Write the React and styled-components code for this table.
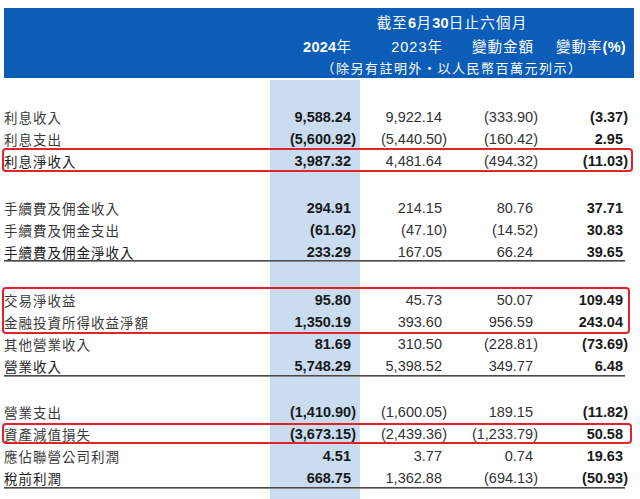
import React from 'react';
import styled, { createGlobalStyle, css } from 'styled-components';

const GlobalStyle = createGlobalStyle`
  html, body { margin: 0; padding: 0; background: #fff; }
  body {
    font-family: "Liberation Sans", "Noto Sans CJK TC", sans-serif;
    overflow: hidden;
  }
`;

const COLS = '270px 90px 91px 91px 90px';

const Page = styled.div`
  width: 640px;
  height: 499px;
  box-sizing: border-box;
  padding-top: 8px;
  display: flex;
  flex-direction: column;
`;

const Header = styled.header`
  margin-left: 4px;
  width: 630px;
  height: 70px;
  box-sizing: border-box;
  padding-top: 1px;
  background: #0b5db8;
  color: #fff;
  display: grid;
  grid-template-columns: 266px 90px 91px 91px 92px;
  grid-template-rows: 24px 24px 20px;
  align-items: center;
  font-size: 14.5px;
`;

const Period = styled.div`
  grid-column: 2 / -1;
  text-align: center;
  letter-spacing: 1.2px;
`;

const HeadCell = styled.div`
  text-align: right;
  padding-right: 8px;
  letter-spacing: 1px;
  white-space: nowrap;
`;

const Strong = styled.b`
  font-weight: 700;
  letter-spacing: 0.3px;
`;

const Note = styled.div`
  grid-column: 2 / -1;
  text-align: center;
  font-size: 13px;
  letter-spacing: 1.5px;
  white-space: nowrap;
`;

const Sheet = styled.main`
  margin-top: 2px;
  flex: 1;
  padding-top: 26px;
  background: linear-gradient(
    to right,
    transparent 270px,
    #c9dcf0 270px,
    #c9dcf0 360px,
    transparent 360px
  );
  display: flex;
  flex-direction: column;
`;

const Group = styled.section`
  display: flex;
  flex-direction: column;
  flex-shrink: 0;
  margin-top: ${p => p.$gap}px;
`;

const Row = styled.div`
  display: grid;
  grid-template-columns: ${COLS};
  height: 22px;
  flex-shrink: 0;
  align-items: center;
  ${p =>
    p.$rule !== undefined &&
    css`
      background-image: linear-gradient(#4a4a4a, #4a4a4a 50%, #8a8a8a 50%, #8a8a8a);
      background-repeat: no-repeat;
      background-size: 621px 2px;
      background-position: 4px calc(100% - ${p.$rule}px);
    `}
`;

const Label = styled.div`
  padding-left: 4px;
  font-family: "Noto Sans CJK TC", sans-serif;
  font-size: 13.5px;
  letter-spacing: 1px;
  color: ${p => (p.$total ? '#1c1c1c' : '#3a3a3a')};
  white-space: nowrap;
`;

const Num = styled.div`
  text-align: right;
  font-size: 14.5px;
  font-weight: ${p => (p.$bold ? 700 : 400)};
  color: ${p => (p.$bold ? '#1a1a1a' : '#333')};
  padding-right: ${p => (p.$paren ? 4 : 9)}px;
  white-space: nowrap;
`;

const Highlight = styled.div`
  position: relative;
`;

const Frame = styled.span`
  position: absolute;
  left: 2px;
  right: ${p => p.$right}px;
  top: ${p => p.$top}px;
  bottom: ${p => p.$bottom}px;
  border: 2px solid #e3232a;
  border-radius: 4px;
  pointer-events: none;
`;

const r = (label, values, extra = {}) => ({ label, values, ...extra });

const groups = [
  {
    gap: 0,
    blocks: [
      { rows: [r('利息收入', ['9,588.24', '9,922.14', '(333.90)', '(3.37)'])] },
      { rows: [r('利息支出', ['(5,600.92)', '(5,440.50)', '(160.42)', '2.95'])] },
      {
        box: { right: 7, top: -2, bottom: 0 },
        rows: [r('利息淨收入', ['3,987.32', '4,481.64', '(494.32)', '(11.03)'], { total: true })],
      },
    ],
  },
  {
    gap: 25,
    blocks: [
      { rows: [r('手續費及佣金收入', ['294.91', '214.15', '80.76', '37.71'])] },
      { rows: [r('手續費及佣金支出', ['(61.62)', '(47.10)', '(14.52)', '30.83'])] },
      {
        rows: [
          r('手續費及佣金淨收入', ['233.29', '167.05', '66.24', '39.65'], { total: true, rule: 1 }),
        ],
      },
    ],
  },
  {
    gap: 26,
    blocks: [
      {
        box: { right: 10, top: -2, bottom: -1 },
        rows: [
          r('交易淨收益', ['95.80', '45.73', '50.07', '109.49']),
          r('金融投資所得收益淨額', ['1,350.19', '393.60', '956.59', '243.04']),
        ],
      },
      { rows: [r('其他營業收入', ['81.69', '310.50', '(228.81)', '(73.69)'])] },
      { rows: [r('營業收入', ['5,748.29', '5,398.52', '349.77', '6.48'], { total: true, rule: 0 })] },
    ],
  },
  {
    gap: 24,
    blocks: [
      { rows: [r('營業支出', ['(1,410.90)', '(1,600.05)', '189.15', '(11.82)'])] },
      {
        box: { right: 8, top: 0, bottom: 1 },
        rows: [r('資產減值損失', ['(3,673.15)', '(2,439.36)', '(1,233.79)', '50.58'])],
      },
      { rows: [r('應佔聯營公司利潤', ['4.51', '3.77', '0.74', '19.63'])] },
      { rows: [r('稅前利潤', ['668.75', '1,362.88', '(694.13)', '(50.93)'], { total: true, rule: 0 })] },
    ],
  },
];

function DataRow({ row }) {
  const [a, b, c, d] = row.values;
  return (
    <Row $rule={row.rule}>
      <Label $total={row.total}>{row.label}</Label>
      <Num $bold $paren={a.startsWith('(')}>{a}</Num>
      <Num $paren={b.startsWith('(')}>{b}</Num>
      <Num $paren={c.startsWith('(')}>{c}</Num>
      <Num $bold $paren={d.startsWith('(')}>{d}</Num>
    </Row>
  );
}

export default function App() {
  return (
    <>
      <GlobalStyle />
      <Page>
        <Header>
          <Period>
            截至<Strong>6</Strong>月<Strong>30</Strong>日止六個月
          </Period>
          <div />
          <HeadCell>
            <Strong>2024</Strong>年
          </HeadCell>
          <HeadCell>2023年</HeadCell>
          <HeadCell>變動金額</HeadCell>
          <HeadCell>
            變動率<Strong>(%)</Strong>
          </HeadCell>
          <Note>（除另有註明外・以人民幣百萬元列示）</Note>
        </Header>
        <Sheet>
          {groups.map((g, gi) => (
            <Group key={gi} $gap={g.gap}>
              {g.blocks.map((blk, bi) => {
                const rows = blk.rows.map((row, ri) => <DataRow key={ri} row={row} />);
                return blk.box ? (
                  <Highlight key={bi}>
                    {rows}
                    <Frame
                      $right={blk.box.right}
                      $top={blk.box.top}
                      $bottom={blk.box.bottom}
                    />
                  </Highlight>
                ) : (
                  <React.Fragment key={bi}>{rows}</React.Fragment>
                );
              })}
            </Group>
          ))}
        </Sheet>
      </Page>
    </>
  );
}
